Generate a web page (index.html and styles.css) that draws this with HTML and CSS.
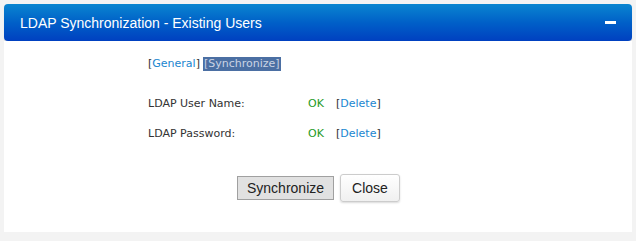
FILE: index.html
```html
<!DOCTYPE html>
<html lang="en">
<head>
  <meta charset="UTF-8" />
  <title>LDAP Synchronization - Existing Users</title>
  <link rel="stylesheet" href="styles.css">
</head>
<body>

<div class="dialog">
  <div class="dialog-header">
    <h1>LDAP Synchronization - Existing Users</h1>
    <span class="dialog-min" aria-label="Minimize"></span>
  </div>

  <div class="dialog-body">
    <div class="tabs">
      <span class="tab">[<a href="#">General</a>]</span>
      <span class="tab tab-active">[Synchronize]</span>
    </div>

    <!-- Stored credentials -->
    <div class="fields">
      <div class="field">
        <span class="field-label">LDAP User Name:</span>
        <span class="field-status">OK</span>
        <span class="field-action">[<a href="#">Delete</a>]</span>
      </div>
      <div class="field">
        <span class="field-label">LDAP Password:</span>
        <span class="field-status">OK</span>
        <span class="field-action">[<a href="#">Delete</a>]</span>
      </div>
    </div>

    <div class="actions">
      <button class="btn btn-sync">Synchronize</button>
      <button class="btn btn-close">Close</button>
    </div>
  </div>
</div>

</body>
</html>
```

FILE: styles.css
```css
body {
  margin: 0;
  padding: 4px;
  background-color: #f3f3f3;
  font-family: 'DejaVu Sans', Verdana, sans-serif;
  color: #333;
}
.dialog {
  width: 628px;
}
.dialog-header {
  height: 37px;
  padding: 0 16px;
  display: flex;
  align-items: center;
  justify-content: space-between;
  border-radius: 4px;
  background: linear-gradient(to bottom, #0a85d0 0%, #0060c8 50%, #0040c0 100%);
  box-shadow: 0 1px 1px rgba(0,0,0,0.15);
}
.dialog-header h1 {
  margin: 0;
  font-family: 'Liberation Sans', Arial, sans-serif;
  font-size: 14px;
  font-weight: normal;
  color: #fff;
}
.dialog-min {
  width: 11px;
  height: 3px;
  background: #fff;
}
.dialog-body {
  background: #fff;
  height: 191px;
  padding: 16px 0 0 144px;
  box-sizing: border-box;
  font-size: 11px;
}
.tabs {
  display: flex;
  gap: 3px;
  line-height: 14px;
}
.tab a, .field-action a {
  color: #1a86d0;
  text-decoration: none;
}
.tab-active {
  background: #4b6fa3;
  color: #c9d3e3;
  padding: 0 1px;
}
.fields {
  display: flex;
  flex-direction: column;
  gap: 16px;
  margin-top: 26px;
}
.field {
  display: flex;
  line-height: 14px;
}
.field-label {
  width: 160px;
  color: #333;
}
.field-status {
  width: 28px;
  color: #1e9a1e;
}
.actions {
  display: flex;
  gap: 6px;
  align-items: center;
  margin: 33px 0 0 89px;
}
.btn {
  font-family: 'Liberation Sans', Arial, sans-serif;
  font-size: 14px;
  color: #222;
  cursor: pointer;
}
.btn-sync {
  height: 24px;
  padding: 0 9px;
  background: #e1e1e1;
  border: 1px solid #a0a0a0;
  border-radius: 0;
}
.btn-close {
  height: 28px;
  padding: 0 11px;
  background: linear-gradient(to bottom, #fff, #f0f0f0);
  border: 1px solid #ccc;
  border-radius: 3px;
  box-shadow: 0 1px 2px rgba(0,0,0,0.15);
}
```
